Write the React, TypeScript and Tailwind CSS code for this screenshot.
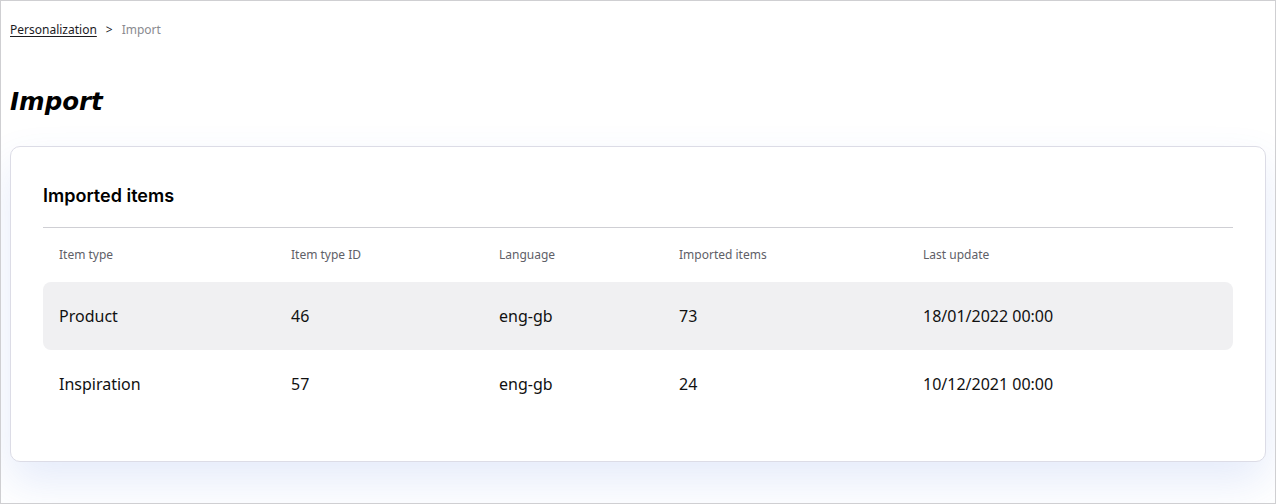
const rows = [
  { type: "Product", id: "46", lang: "eng-gb", count: "73", updated: "18/01/2022 00:00" },
  { type: "Inspiration", id: "57", lang: "eng-gb", count: "24", updated: "10/12/2021 00:00" },
];

const cols = "grid grid-cols-[232px_208px_180px_244px_1fr]";

export default function App() {
  return (
    <div className="h-[504px] w-[1276px] overflow-hidden border border-[#cfcfd2] bg-white px-[9px] font-['Noto_Sans',sans-serif] text-black">
      <nav className="flex h-[58px] items-center gap-[9px] text-[12px]">
        <a href="#" className="text-[#1b1b1f] underline underline-offset-2">
          Personalization
        </a>
        <span className="text-[#1b1b1f]">&gt;</span>
        <span className="text-[#8a8a8f]">Import</span>
      </nav>
      <h1 className="flex h-[87px] items-center pb-[1px] font-['DejaVu_Sans',sans-serif] text-[24.5px] font-bold italic">
        Import
      </h1>
      <section className="rounded-[10px] border border-[#dcdce6] bg-white px-[32px] pt-[37px] pb-[43px] shadow-[0_20px_44px_0_rgba(70,110,220,0.14)]">
        <h2 className="mb-[19px] font-['Inter',sans-serif] text-[18px] leading-[24px] font-semibold">
          Imported items
        </h2>
        <div className="border-t border-[#cfcfd4]">
          <div className={`${cols} h-[54px] items-center px-4 text-[12px] text-[#606067]`}>
            <div>Item type</div>
            <div>Item type ID</div>
            <div>Language</div>
            <div>Imported items</div>
            <div>Last update</div>
          </div>
          {rows.map((r, i) => (
            <div
              key={r.type}
              className={`${cols} h-[68px] items-center rounded-[8px] px-4 text-[16px] text-[#111] ${i === 0 ? "bg-[#f0f0f2]" : ""}`}
            >
              <div>{r.type}</div>
              <div>{r.id}</div>
              <div>{r.lang}</div>
              <div>{r.count}</div>
              <div>{r.updated}</div>
            </div>
          ))}
        </div>
      </section>
    </div>
  );
}
